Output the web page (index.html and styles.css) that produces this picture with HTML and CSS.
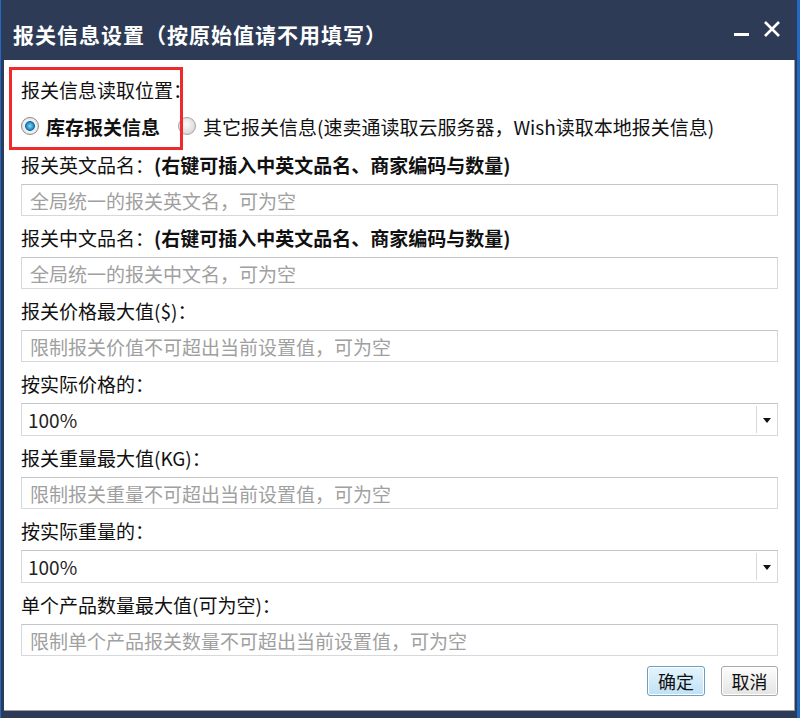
FILE: index.html
```html
<!DOCTYPE html>
<html lang="zh-CN">
<head>
  <meta charset="UTF-8" />
  <title>报关信息设置</title>
  <link rel="stylesheet" href="styles.css">
</head>
<body>
  <div class="dialog">
    <div class="titlebar">
      <span class="title">报关信息设置（按原始值请不用填写）</span>
      <div class="win-buttons">
        <svg class="win-btn" width="18" height="18" viewBox="0 0 18 18"><rect x="1" y="13" width="15" height="3" fill="#fff"/></svg>
        <svg class="win-btn" width="18" height="18" viewBox="0 0 18 18"><path d="M2 2 L16 16 M16 2 L2 16" stroke="#fff" stroke-width="2.6" fill="none"/></svg>
      </div>
    </div>

    <div class="content">
      <div class="highlight"></div>

      <div class="label">报关信息读取位置：</div>
      <div class="radio-row">
        <label class="radio checked"><span class="dot"></span><b>库存报关信息</b></label>
        <label class="radio"><span class="dot"></span>其它报关信息(速卖通读取云服务器，Wish读取本地报关信息)</label>
      </div>

      <div class="field">
        <div class="label">报关英文品名：<b>(右键可插入中英文品名、商家编码与数量)</b></div>
        <input class="text-input" type="text" placeholder="全局统一的报关英文名，可为空" />
      </div>

      <div class="field">
        <div class="label">报关中文品名：<b>(右键可插入中英文品名、商家编码与数量)</b></div>
        <input class="text-input" type="text" placeholder="全局统一的报关中文名，可为空" />
      </div>

      <div class="field">
        <div class="label">报关价格最大值($)：</div>
        <input class="text-input" type="text" placeholder="限制报关价值不可超出当前设置值，可为空" />
      </div>

      <div class="field">
        <div class="label">按实际价格的：</div>
        <div class="select">
          <span class="select-value">100%</span>
          <span class="select-arrow"></span>
        </div>
      </div>

      <div class="field">
        <div class="label">报关重量最大值(KG)：</div>
        <input class="text-input" type="text" placeholder="限制报关重量不可超出当前设置值，可为空" />
      </div>

      <div class="field">
        <div class="label">按实际重量的：</div>
        <div class="select">
          <span class="select-value">100%</span>
          <span class="select-arrow"></span>
        </div>
      </div>

      <div class="field">
        <div class="label">单个产品数量最大值(可为空)：</div>
        <input class="text-input" type="text" placeholder="限制单个产品报关数量不可超出当前设置值，可为空" />
      </div>

      <div class="actions">
        <button class="btn btn-primary">确定</button>
        <button class="btn">取消</button>
      </div>
    </div>
  </div>
</body>
</html>
```

FILE: styles.css
```css
body {
  margin: 0;
  background: #2d3b56;
  font-family: "Noto Sans CJK SC", "Noto Sans", sans-serif;
}

.dialog {
  width: 800px;
  height: 718px;
  box-sizing: border-box;
  background: #2d3b56;
  border-left: 1px solid #1f6ac4;
  border-right: 3px solid #1f6ac4;
  padding: 0 2px 7px 3px;
  display: flex;
  flex-direction: column;
}

.titlebar {
  height: 60px;
  flex-shrink: 0;
  display: flex;
  align-items: center;
  justify-content: space-between;
  padding: 8px 0 0 9px;
  box-sizing: border-box;
}

.title {
  color: #fff;
  font-size: 21px;
  font-weight: bold;
  letter-spacing: 1px;
}

.win-buttons {
  display: flex;
  gap: 12px;
  align-items: center;
  margin-right: 14px;
  margin-top: -10px;
}

.content {
  position: relative;
  flex: 1;
  background: #fff;
  border-right: 1px solid #9a9ca4;
  border-bottom: 1px solid #9a9ca4;
  padding: 18px 16px 0 17px;
  color: #111;
  font-size: 19px;
}

/* 红框标注 */
.highlight {
  position: absolute;
  left: 5px;
  top: 7px;
  width: 168px;
  height: 77px;
  border: 3px solid #ee2a2a;
  pointer-events: none;
}

.label {
  height: 24px;
  line-height: 24px;
  white-space: nowrap;
}

.radio-row {
  display: flex;
  align-items: center;
  gap: 18px;
  height: 24px;
  margin-top: 12px;
  margin-bottom: 15px;
  white-space: nowrap;
}

.radio {
  display: flex;
  align-items: center;
  gap: 7px;
}

.radio .dot {
  width: 16px;
  height: 16px;
  border-radius: 50%;
  border: 1px solid #a4a4a4;
  background: radial-gradient(circle at 45% 40%, #fafafa 0%, #e0e0e0 60%, #c4c4c4 100%);
}

.radio.checked .dot {
  border-color: #8c8c8c;
  background: radial-gradient(circle at 50% 50%, #8ad8f6 0%, #2796cf 28%, #176a9c 40%, #f4f4f4 47%, #d4d4d4 100%);
}

.field {
  margin-bottom: 10px;
}

.field .label {
  margin-bottom: 7px;
}

.text-input {
  display: block;
  width: 100%;
  height: 32px;
  box-sizing: border-box;
  border: 1px solid #d6d8dc;
  border-top-color: #c2c4c8;
  padding: 0 8px;
  font-family: inherit;
  font-size: 19px;
  color: #222;
  outline: none;
}

.text-input::placeholder {
  color: #a0a0a0;
}

.select {
  display: flex;
  height: 33px;
  box-sizing: border-box;
  border: 1px solid #d6d8dc;
  border-top-color: #c2c4c8;
}

.select-value {
  flex: 1;
  line-height: 31px;
  padding-left: 6px;
  color: #222;
}

.select-arrow {
  width: 20px;
  margin: 2px 0;
  border-left: 1px solid #d6d8dc;
  position: relative;
}

.select-arrow::after {
  content: "";
  position: absolute;
  left: 6px;
  top: 12px;
  border-left: 4px solid transparent;
  border-right: 4px solid transparent;
  border-top: 5px solid #111;
}

.actions {
  display: flex;
  justify-content: flex-end;
  gap: 16px;
}

.btn {
  width: 57px;
  height: 30px;
  padding: 0;
  font-family: inherit;
  font-size: 18px;
  color: #111;
  border: 1px solid #a8a8a8;
  border-radius: 3px;
  background: linear-gradient(#fdfdfd, #e4e4e4);
  box-shadow: inset 0 0 0 1px #fff;
}

.btn-primary {
  width: 58px;
  border-color: #6f9fc0;
  background: linear-gradient(#e6f4fc, #bfe1f5);
}
```
